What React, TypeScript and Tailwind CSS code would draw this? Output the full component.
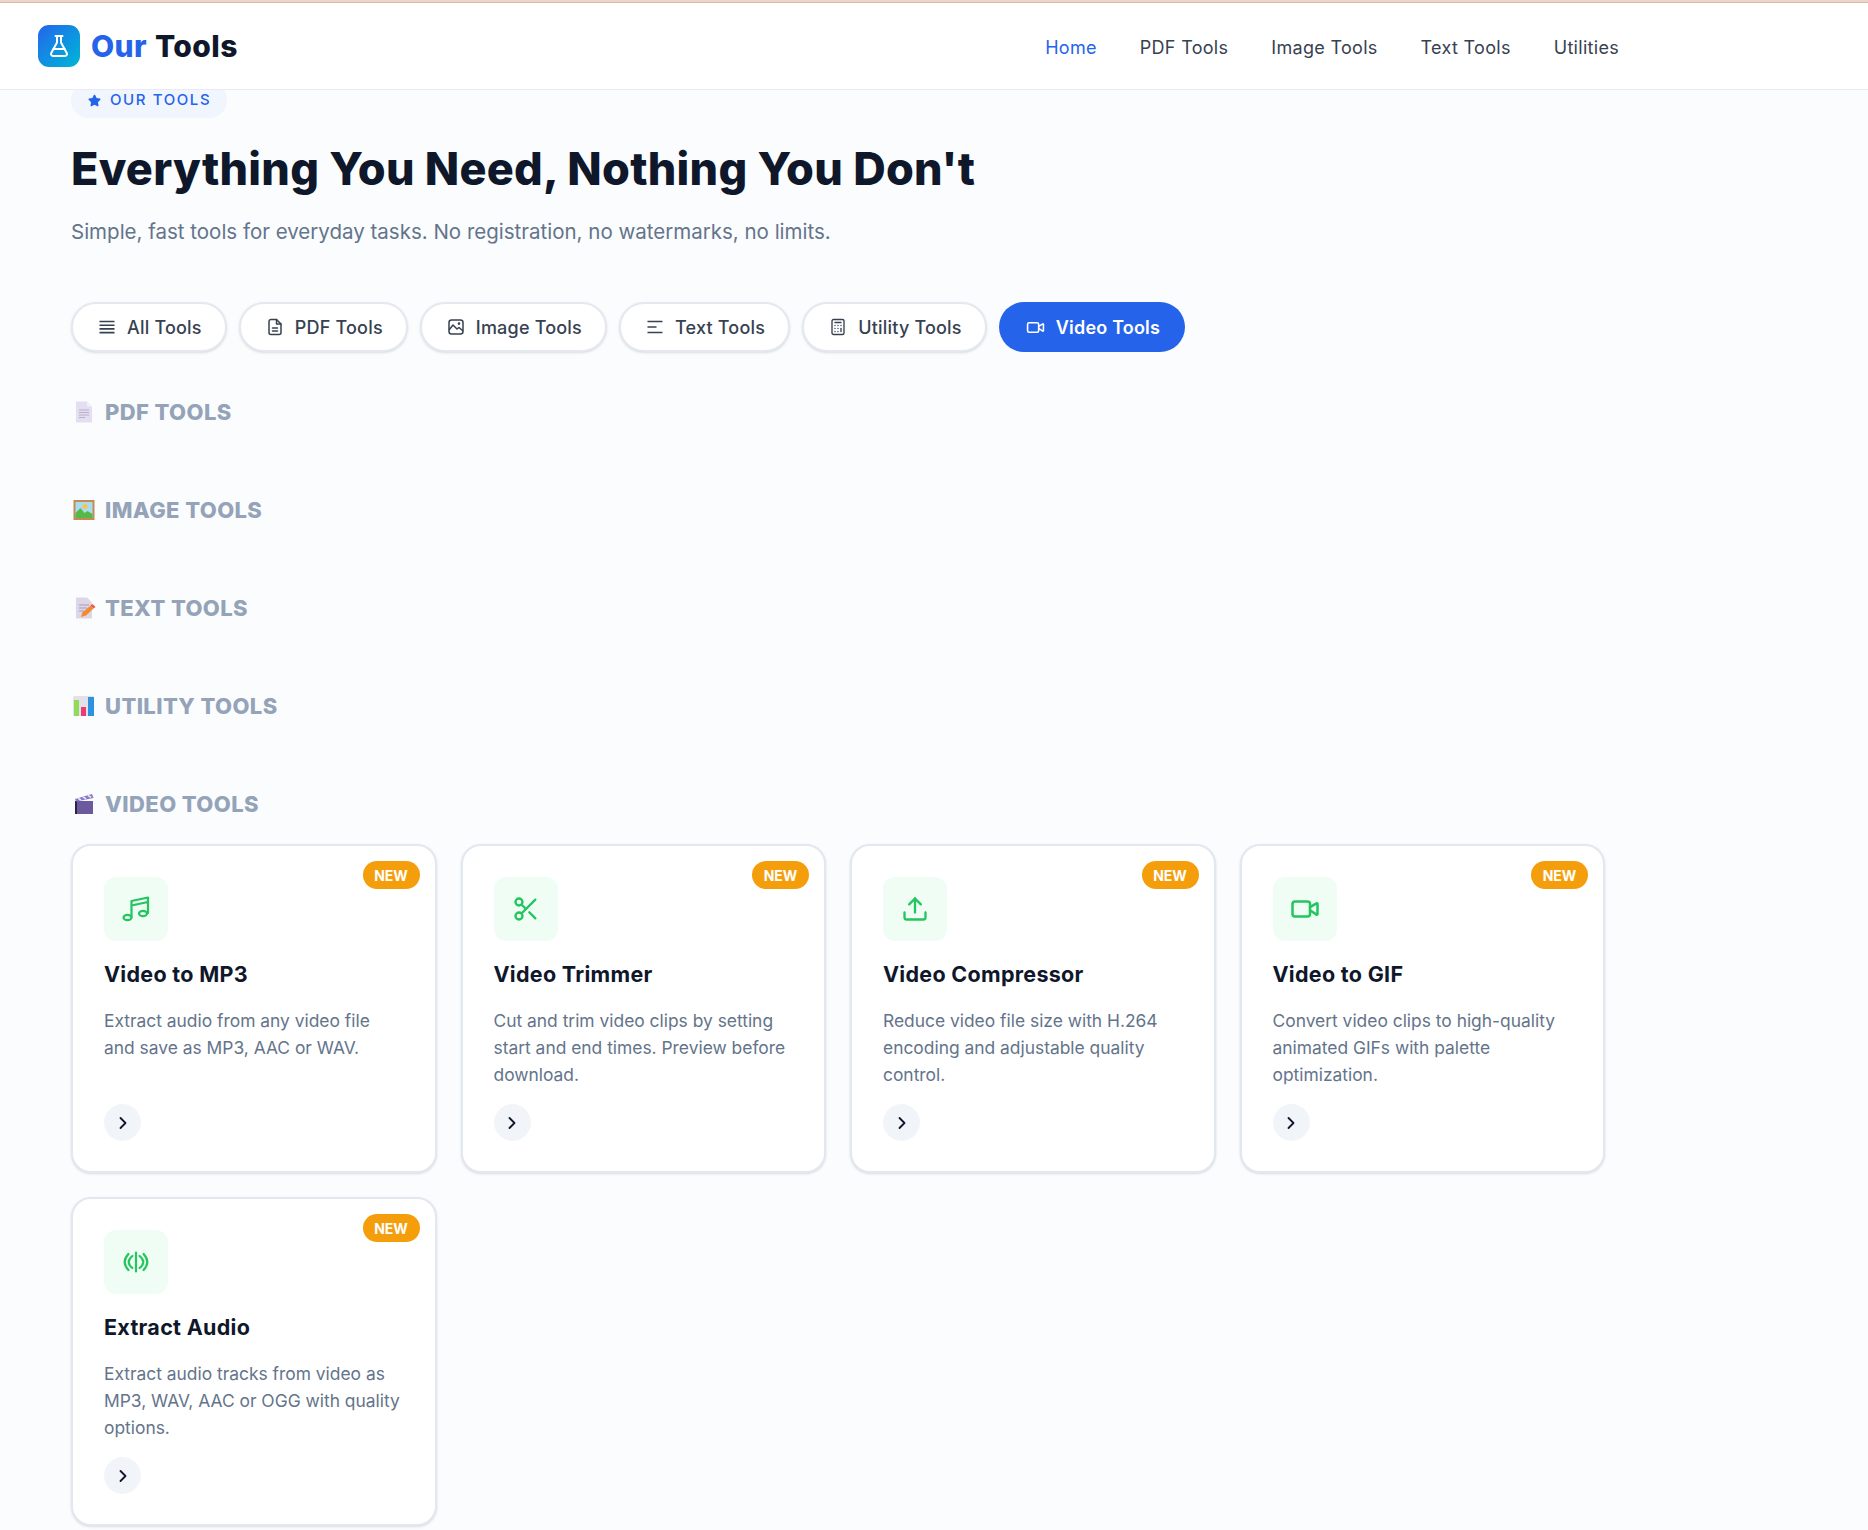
import { ChevronRight, FlaskConical, Calculator, Video, Scissors, Upload } from 'lucide-react';
import { FaStar } from 'react-icons/fa';
import type { ReactNode } from 'react';

const AllIcon = () => (
  <svg width="18" height="18" viewBox="0 0 18 18" fill="none" stroke="currentColor" strokeWidth="1.6">
    <path d="M1.5 3.5h15M1.5 7.2h15M1.5 10.9h15M1.5 14.6h15" />
  </svg>
);

const FileIcon = () => (
  <svg width="18" height="18" viewBox="0 0 18 18" fill="none" stroke="currentColor" strokeWidth="1.5" strokeLinecap="round" strokeLinejoin="round">
    <path d="M10.500 1.500H5a2 2 0 0 0-2 2v11a2 2 0 0 0 2 2h8a2 2 0 0 0 2-2V6z" />
    <path d="M10.500 1.500V6H15M6.500 10h5M6.500 13h5" />
  </svg>
);

const ImageIcon = () => (
  <svg width="18" height="18" viewBox="0 0 18 18" fill="none" stroke="currentColor" strokeWidth="1.5" strokeLinejoin="round">
    <rect x="2" y="2" width="14" height="14" rx="2.5" />
    <path d="M2 12l4-5 4 4 2-1.5 4 3.5" />
    <circle cx="12" cy="5.6" r="0.6" />
  </svg>
);

const TextIcon = () => (
  <svg width="18" height="18" viewBox="0 0 18 18" fill="none" stroke="currentColor" strokeWidth="1.6">
    <path d="M1.5 3.5h15M1.5 9h9M1.5 14.5h15" />
  </svg>
);

const MusicIcon = () => (
  <svg width="28" height="28" viewBox="0 0 28 28" fill="none" stroke="currentColor" strokeWidth="2.2" strokeLinecap="round" strokeLinejoin="round">
    <ellipse cx="5.500" cy="22.500" rx="4" ry="2.700" />
    <ellipse cx="21" cy="18.500" rx="4" ry="2.700" />
    <path d="M9.500 22V6l16.500-3.500V18M9.500 10.500L26 7" />
  </svg>
);

const AudioIcon = () => (
  <svg width="26" height="26" viewBox="0 0 26 26" fill="none" stroke="currentColor" strokeWidth="2.200" strokeLinecap="round">
    <path d="M13 3.500v19M9.400 7Q2 13 9.400 19M16.600 7Q24 13 16.600 19M5.400 5Q-2 13 5.400 21M20.600 5Q28 13 20.600 21" />
  </svg>
);

const PdfEmoji = () => (
  <svg width="24" height="24" viewBox="0 0 24 24">
    <path d="M4 1.500h11l5 5V22.500H4z" fill="#e4dff0" />
    <path d="M15 1.500l5 5h-5z" fill="#f2eff8" />
    <path d="M7 10h10M7 12.500h10M7 15h10M7 17.500h6" stroke="#b9aecb" strokeWidth="1" />
  </svg>
);

const ImageEmoji = () => (
  <svg width="24" height="24" viewBox="0 0 24 24">
    <rect x="1.500" y="2" width="21" height="20" fill="#c48a56" />
    <rect x="3.500" y="4" width="17" height="16" fill="#a9dcef" />
    <circle cx="13" cy="8.500" r="2.500" fill="#f8c44a" />
    <path d="M3.500 15l5-5 4 5 3-2 5 3v4h-17z" fill="#57b84a" />
  </svg>
);

const TextEmoji = () => (
  <svg width="24" height="24" viewBox="0 0 24 24">
    <path d="M4 1.500h11l5 5V22.500H4z" fill="#ddd6e6" />
    <path d="M7 9h10M7 12h8M7 15h5" stroke="#a79ab8" strokeWidth="1" />
    <path d="M9 21l1.500-4.500 8-7 3 3-7.500 7z" fill="#f58a2c" />
    <path d="M18.500 9.500l2-1.500 3 3-2 1.500z" fill="#f0584a" />
  </svg>
);

const UtilityEmoji = () => (
  <svg width="24" height="24" viewBox="0 0 24 24">
    <rect x="1" y="2" width="21" height="20" rx="1.500" fill="#e4e0ea" />
    <rect x="2" y="6" width="5" height="16" fill="#8fdc5a" />
    <rect x="9" y="13" width="5" height="9" fill="#e83e74" />
    <rect x="16" y="3" width="6" height="19" fill="#2c93e0" />
  </svg>
);

const VideoEmoji = () => (
  <svg width="24" height="24" viewBox="0 0 24 24">
    <path d="M3 9h18v13H3z" fill="#6b5b9e" />
    <path d="M3 9h2v13H3z" fill="#2b2440" />
    <path d="M3 7l17-5 1.500 4L4 9.500z" fill="#8d7bc8" />
    <path d="M6 6.200l3 2M11 4.800l3 2M16 3.300l3 2" stroke="#f1edf9" strokeWidth="1.400" />
  </svg>
);

const filters: { label: string; icon: ReactNode; active?: boolean }[] = [
  { label: 'All Tools', icon: <AllIcon /> },
  { label: 'PDF Tools', icon: <FileIcon /> },
  { label: 'Image Tools', icon: <ImageIcon /> },
  { label: 'Text Tools', icon: <TextIcon /> },
  { label: 'Utility Tools', icon: <Calculator size={18} strokeWidth={1.8} /> },
  { label: 'Video Tools', icon: <Video size={19} strokeWidth={2} />, active: true },
];

const sections: { title: string; emoji: ReactNode }[] = [
  { title: 'PDF Tools', emoji: <PdfEmoji /> },
  { title: 'Image Tools', emoji: <ImageEmoji /> },
  { title: 'Text Tools', emoji: <TextEmoji /> },
  { title: 'Utility Tools', emoji: <UtilityEmoji /> },
];

const tools: { name: string; desc: string; icon: ReactNode }[] = [
  { name: 'Video to MP3', desc: 'Extract audio from any video file and save as MP3, AAC or WAV.', icon: <MusicIcon /> },
  { name: 'Video Trimmer', desc: 'Cut and trim video clips by setting start and end times. Preview before download.', icon: <Scissors size={28} strokeWidth={2} /> },
  { name: 'Video Compressor', desc: 'Reduce video file size with H.264 encoding and adjustable quality control.', icon: <Upload size={28} strokeWidth={2} /> },
  { name: 'Video to GIF', desc: 'Convert video clips to high-quality animated GIFs with palette optimization.', icon: <Video size={30} strokeWidth={2} /> },
  { name: 'Extract Audio', desc: 'Extract audio tracks from video as MP3, WAV, AAC or OGG with quality options.', icon: <AudioIcon /> },
];

const SectionTitle = ({ title, emoji }: { title: string; emoji: ReactNode }) => (
  <h2 className="flex h-[28px] items-center gap-[9px] text-[22px] font-extrabold uppercase leading-[28px] tracking-[0.4px] text-[#94a3b8]">
    <span className="ml-[1px] flex w-[24px] justify-center">{emoji}</span>
    {title}
  </h2>
);

export default function App() {
  return (
    <div className="min-h-[1530px] w-[1868px] bg-[#fafcfe] font-['Inter',sans-serif]">
      <div className="h-[3px] border-b border-[#d9bbab] bg-[#ecd5ca]" />
      <header className="relative z-10 flex h-[87px] items-center justify-between border-b border-[#e8ecf2] bg-white pl-[38px] pr-[249px]">
        <div className="flex items-center gap-[11px]">
          <div className="flex h-[42px] w-[42px] items-center justify-center rounded-[11px] bg-linear-to-br from-[#2563eb] to-[#06b6d4] text-white">
            <FlaskConical size={24} strokeWidth={2} />
          </div>
          <span className="text-[30px] font-extrabold tracking-[0.4px] [word-spacing:1px] text-[#0f172a]">
            <span className="text-[#2563eb]">Our</span> Tools
          </span>
        </div>
        <nav className="flex gap-[43px] pt-[3px] text-[18px] font-normal tracking-[0.3px] text-[#374151]">
          <a className="text-[#2563eb]">Home</a>
          <a>PDF Tools</a>
          <a>Image Tools</a>
          <a>Text Tools</a>
          <a>Utilities</a>
        </nav>
      </header>

      <main className="max-w-[1605px] pl-[71px]">
        <div className="-mt-[8px] flex h-[36px] w-[156px] items-center gap-[9px] rounded-full bg-[#f0f5fe] pl-[17px] text-[15px] font-medium tracking-[1.6px] text-[#2563eb]">
          <FaStar size={13} />
          OUR TOOLS
        </div>

        <h1 className="mt-[23px] text-[45px] font-extrabold leading-[56px] tracking-[0.25px] text-[#0f172a]">
          Everything You Need, Nothing You Don't
        </h1>
        <p className="mt-[19px] text-[20.500px] leading-[32px] text-[#64748b]">
          Simple, fast tools for everyday tasks. No registration, no watermarks, no limits.
        </p>

        <div className="mt-[54px] flex gap-[12px]">
          {filters.map((f) => (
            <button
              key={f.label}
              className={
                f.active
                  ? 'flex h-[50px] items-center gap-[11px] rounded-full bg-[#2563eb] pl-[27px] pr-[25px] text-[18px] font-semibold tracking-[0.2px] text-white'
                  : 'flex h-[50px] items-center gap-[11px] rounded-full border-2 border-[#e5e9ef] bg-white pl-[25px] pr-[23px] text-[18px] font-medium tracking-[0.2px] text-[#374151] shadow-sm'
              }
            >
              {f.icon}
              {f.label}
            </button>
          ))}
        </div>

        <div className="mt-[46px] flex flex-col gap-[70px]">
          {sections.map((s) => (
            <SectionTitle key={s.title} title={s.title} emoji={s.emoji} />
          ))}
          <section>
            <SectionTitle title="Video Tools" emoji={<VideoEmoji />} />
            <div className="mt-[26px] grid grid-cols-4 gap-6">
              {tools.map((t) => (
                <div
                  key={t.name}
                  className="relative flex h-[329px] flex-col rounded-[20px] border-2 border-[#e2e8f0] bg-white px-[31px] pt-[31px] shadow-sm"
                >
                  <span className="absolute right-[15px] top-[15px] flex h-[28px] w-[57px] items-center justify-center rounded-full bg-[#f59e0b] text-[14px] font-bold text-white">
                    NEW
                  </span>
                  <div className="flex h-[64px] w-[64px] items-center justify-center rounded-[12px] bg-[#f0fdf4] text-[#22c55e]">
                    {t.icon}
                  </div>
                  <h3 className="mt-[19px] text-[21.500px] font-bold leading-[28px] tracking-[0.3px] text-[#0f172a]">{t.name}</h3>
                  <p className="mt-[19px] text-[17.400px] leading-[27px] text-[#64748b]">{t.desc}</p>
                  <div className="absolute bottom-[30px] left-[31px] flex h-[37px] w-[37px] items-center justify-center rounded-full bg-[#f1f5f9] text-[#0f172a]">
                    <ChevronRight size={20} strokeWidth={2.2} />
                  </div>
                </div>
              ))}
            </div>
          </section>
        </div>
      </main>
    </div>
  );
}
